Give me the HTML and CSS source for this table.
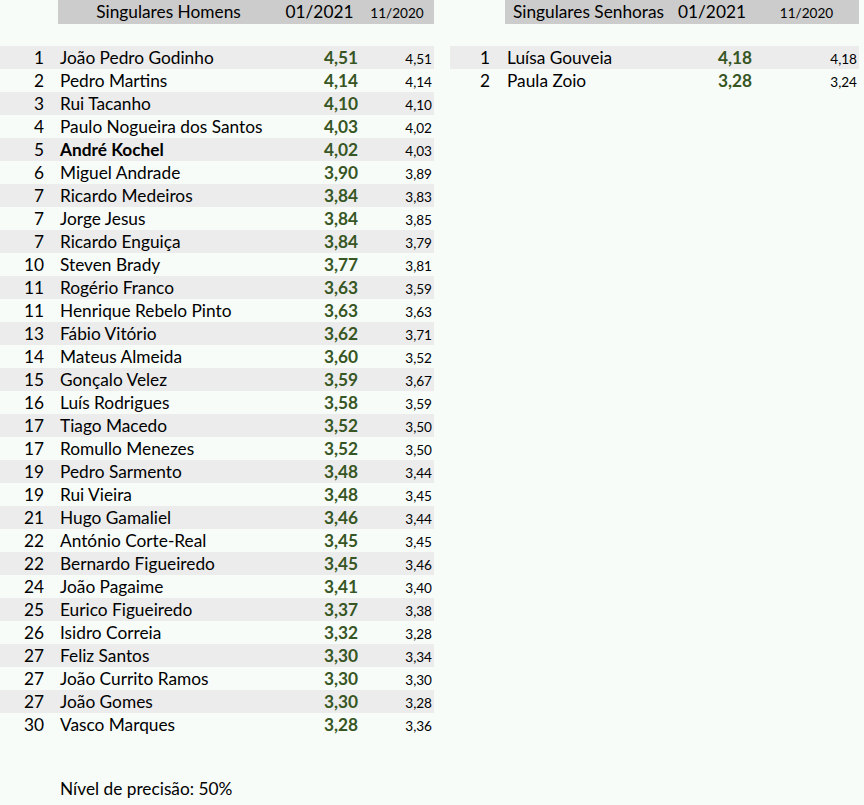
FILE: index.html
```html
<!DOCTYPE html>
<html lang="pt">
<head>
<meta charset="utf-8">
<title>Ranking Singulares</title>
<link rel="stylesheet" href="styles.css">
</head>
<body>
<div class="sheet">
  <section class="tbl tbl-men">
    <div class="head">
      <div class="h-title">Singulares Homens</div>
      <div class="h-cur">01/2021</div>
      <div class="h-prev">11/2020</div>
    </div>
    <div class="spacer"></div>
    <div class="row alt"><span class="rank">1</span><span class="name">João Pedro Godinho</span><span class="score">4,51</span><span class="prev">4,51</span></div>
    <div class="row"><span class="rank">2</span><span class="name">Pedro Martins</span><span class="score">4,14</span><span class="prev">4,14</span></div>
    <div class="row alt"><span class="rank">3</span><span class="name">Rui Tacanho</span><span class="score">4,10</span><span class="prev">4,10</span></div>
    <div class="row"><span class="rank">4</span><span class="name">Paulo Nogueira dos Santos</span><span class="score">4,03</span><span class="prev">4,02</span></div>
    <div class="row alt"><span class="rank">5</span><span class="name strong">André Kochel</span><span class="score">4,02</span><span class="prev">4,03</span></div>
    <div class="row"><span class="rank">6</span><span class="name">Miguel Andrade</span><span class="score">3,90</span><span class="prev">3,89</span></div>
    <div class="row alt"><span class="rank">7</span><span class="name">Ricardo Medeiros</span><span class="score">3,84</span><span class="prev">3,83</span></div>
    <div class="row"><span class="rank">7</span><span class="name">Jorge Jesus</span><span class="score">3,84</span><span class="prev">3,85</span></div>
    <div class="row alt"><span class="rank">7</span><span class="name">Ricardo Enguiça</span><span class="score">3,84</span><span class="prev">3,79</span></div>
    <div class="row"><span class="rank">10</span><span class="name">Steven Brady</span><span class="score">3,77</span><span class="prev">3,81</span></div>
    <div class="row alt"><span class="rank">11</span><span class="name">Rogério Franco</span><span class="score">3,63</span><span class="prev">3,59</span></div>
    <div class="row"><span class="rank">11</span><span class="name">Henrique Rebelo Pinto</span><span class="score">3,63</span><span class="prev">3,63</span></div>
    <div class="row alt"><span class="rank">13</span><span class="name">Fábio Vitório</span><span class="score">3,62</span><span class="prev">3,71</span></div>
    <div class="row"><span class="rank">14</span><span class="name">Mateus Almeida</span><span class="score">3,60</span><span class="prev">3,52</span></div>
    <div class="row alt"><span class="rank">15</span><span class="name">Gonçalo Velez</span><span class="score">3,59</span><span class="prev">3,67</span></div>
    <div class="row"><span class="rank">16</span><span class="name">Luís Rodrigues</span><span class="score">3,58</span><span class="prev">3,59</span></div>
    <div class="row alt"><span class="rank">17</span><span class="name">Tiago Macedo</span><span class="score">3,52</span><span class="prev">3,50</span></div>
    <div class="row"><span class="rank">17</span><span class="name">Romullo Menezes</span><span class="score">3,52</span><span class="prev">3,50</span></div>
    <div class="row alt"><span class="rank">19</span><span class="name">Pedro Sarmento</span><span class="score">3,48</span><span class="prev">3,44</span></div>
    <div class="row"><span class="rank">19</span><span class="name">Rui Vieira</span><span class="score">3,48</span><span class="prev">3,45</span></div>
    <div class="row alt"><span class="rank">21</span><span class="name">Hugo Gamaliel</span><span class="score">3,46</span><span class="prev">3,44</span></div>
    <div class="row"><span class="rank">22</span><span class="name">António Corte-Real</span><span class="score">3,45</span><span class="prev">3,45</span></div>
    <div class="row alt"><span class="rank">22</span><span class="name">Bernardo Figueiredo</span><span class="score">3,45</span><span class="prev">3,46</span></div>
    <div class="row"><span class="rank">24</span><span class="name">João Pagaime</span><span class="score">3,41</span><span class="prev">3,40</span></div>
    <div class="row alt"><span class="rank">25</span><span class="name">Eurico Figueiredo</span><span class="score">3,37</span><span class="prev">3,38</span></div>
    <div class="row"><span class="rank">26</span><span class="name">Isidro Correia</span><span class="score">3,32</span><span class="prev">3,28</span></div>
    <div class="row alt"><span class="rank">27</span><span class="name">Feliz Santos</span><span class="score">3,30</span><span class="prev">3,34</span></div>
    <div class="row"><span class="rank">27</span><span class="name">João Currito Ramos</span><span class="score">3,30</span><span class="prev">3,30</span></div>
    <div class="row alt"><span class="rank">27</span><span class="name">João Gomes</span><span class="score">3,30</span><span class="prev">3,28</span></div>
    <div class="row"><span class="rank">30</span><span class="name">Vasco Marques</span><span class="score">3,28</span><span class="prev">3,36</span></div>
    <div class="footer">Nível de precisão: 50%</div>
  </section>
  <section class="tbl tbl-women">
    <div class="head">
      <div class="h-title">Singulares Senhoras</div>
      <div class="h-cur">01/2021</div>
      <div class="h-prev">11/2020</div>
    </div>
    <div class="spacer"></div>
    <div class="row alt"><span class="rank">1</span><span class="name">Luísa Gouveia</span><span class="score">4,18</span><span class="prev">4,18</span></div>
    <div class="row"><span class="rank">2</span><span class="name">Paula Zoio</span><span class="score">3,28</span><span class="prev">3,24</span></div>
  </section>
</div>
</body>
</html>
```
FILE: styles.css
```css
html, body {
  margin: 0;
  padding: 0;
  background: #f7fcf9;
}
body {
  font-family: "Lato", "Liberation Sans", sans-serif;
  font-size: 17.3px;
  color: #000;
  width: 864px;
  height: 805px;
  overflow: hidden;
}
.sheet {
  display: flex;
  align-items: flex-start;
  gap: 16px;
}
.tbl-men { width: 434px; }
.tbl-women { width: 409px; }

.head {
  display: grid;
  height: 24px;
  line-height: 24px;
  background: #cccccc;
  text-align: center;
  align-items: baseline;
}
.tbl-men .head {
  margin-left: 58px;
  grid-template-columns: 221px 81px 74px;
}
.tbl-women .head {
  margin-left: 55px;
  grid-template-columns: 165px 84px 105px;
}
.h-title, .h-cur { font-size: 17.3px; }
.h-prev { font-size: 13.6px; }
.tbl-women .h-title { text-align: left; padding-left: 8px; }

.spacer { height: 22px; }

.row {
  display: grid;
  height: 23px;
  line-height: 23px;
  align-items: baseline;
  white-space: nowrap;
}
.row.alt { background: #ececec; }
.tbl-men .row { grid-template-columns: 58px 221px 81px 74px; }
.tbl-women .row { grid-template-columns: 55px 165px 84px 105px; }

.rank { text-align: right; padding-right: 14px; }
.tbl-women .rank { padding-right: 15px; }
.name { padding-left: 2px; }
.name.strong { font-weight: 700; }
.score {
  text-align: right;
  padding-right: 2px;
  font-weight: 700;
  color: #375623;
}
.prev {
  text-align: right;
  padding-right: 2px;
  font-size: 13.6px;
}

.footer {
  margin-top: 41px;
  padding-left: 60px;
  line-height: 23px;
}
```
